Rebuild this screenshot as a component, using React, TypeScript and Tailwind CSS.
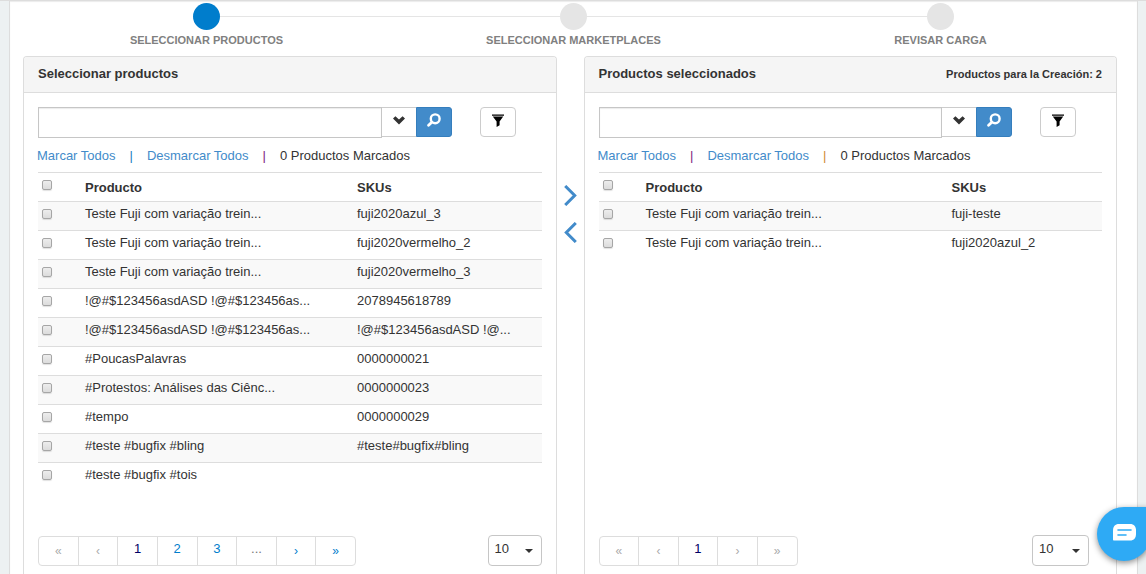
import { useState } from 'react';

type Product = { name: string; sku: string };

const AVAILABLE: Product[] = [
   { name: 'Teste Fuji com variação trein...', sku: 'fuji2020azul_3' },
   { name: 'Teste Fuji com variação trein...', sku: 'fuji2020vermelho_2' },
   { name: 'Teste Fuji com variação trein...', sku: 'fuji2020vermelho_3' },
   { name: '!@#$123456asdASD !@#$123456as...', sku: '2078945618789' },
   { name: '!@#$123456asdASD !@#$123456as...', sku: '!@#$123456asdASD !@...' },
   { name: '#PoucasPalavras', sku: '0000000021' },
   { name: '#Protestos: Análises das Ciênc...', sku: '0000000023' },
   { name: '#tempo', sku: '0000000029' },
   { name: '#teste #bugfix #bling', sku: '#teste#bugfix#bling' },
   { name: '#teste #bugfix #tois', sku: '' },
];

const SELECTED: Product[] = [
   { name: 'Teste Fuji com variação trein...', sku: 'fuji-teste' },
   { name: 'Teste Fuji com variação trein...', sku: 'fuji2020azul_2' },
];

const STEPS = ['SELECCIONAR PRODUCTOS', 'SELECCIONAR MARKETPLACES', 'REVISAR CARGA'];

function Steps() {
   return (
      <ol className="mr-[-7px] flex">
         {STEPS.map((label, index) => (
            <li key={label} className="relative flex flex-1 flex-col items-center">
               {index > 0 ? (
                  <span className="absolute top-[13px] right-1/2 h-px w-full bg-[#e5e5e5]" />
               ) : null}
               <span
                  className={`relative z-10 size-[27px] rounded-full ${index === 0 ? 'bg-[#007dcc]' : 'bg-[#e5e5e5]'}`}
               />
               {index === 0 ? (
                  <span className="absolute top-[13px] left-1/2 h-px w-1/2 bg-[#e5e5e5]" />
               ) : null}
               <span className="mt-[2px] text-[11px] leading-4 font-bold text-[#808080]">{label}</span>
            </li>
         ))}
      </ol>
   );
}

function Checkbox({ label }: { label: string }) {
   return (
      <input
         type="checkbox"
         aria-label={label}
         className="block size-[10px] appearance-none rounded-[2px] border border-[#a6a6a6] bg-linear-to-b from-[#ededed] to-[#dcdcdc] shadow-[0_1px_1px_rgba(0,0,0,0.12)] checked:from-[#428bca] checked:to-[#357ebd]"
      />
   );
}

function SearchBar({ label }: { label: string }) {
   return (
      <div className="flex items-start pr-[26px]">
         <input
            type="text"
            aria-label={label}
            className="h-[31px] min-w-0 flex-1 border border-[#c6c6c6] bg-white px-2 shadow-[inset_0_1px_1px_rgba(0,0,0,0.08)] outline-none"
         />
         <button
            type="button"
            aria-label="Opciones"
            className="flex h-[30px] w-[34px] items-center justify-center border-y border-[#ccc] bg-white"
         >
            <svg width="12" height="9" viewBox="0 0 12 9" className="mb-1" aria-hidden="true">
               <path d="M0 2.6 2.4 0.2 6 3.6 9.6 0.2 12 2.6 6 8.6Z" fill="#333" />
            </svg>
         </button>
         <button
            type="button"
            aria-label="Buscar"
            className="flex h-[30px] w-9 items-center justify-center rounded-r-[3px] border border-[#357ebd] bg-[#428bca]"
         >
            <svg width="14" height="14" viewBox="0 0 14 14" className="mb-1" aria-hidden="true">
               <circle cx="8.2" cy="5.8" r="4.4" fill="none" stroke="#fff" strokeWidth="2.4" />
               <path d="M4.8 9.2 1.6 12.2" stroke="#fff" strokeWidth="2.8" strokeLinecap="round" />
            </svg>
         </button>
         <button
            type="button"
            aria-label="Filtrar"
            className="ml-7 flex h-[30px] w-9 items-center justify-center rounded-[4px] border border-[#ccc] bg-white"
         >
            <svg width="12" height="13" viewBox="0 0 12 13" className="mb-1" aria-hidden="true">
               <path d="M0 0.5H12V1.8H0ZM0.8 2.6H11.2L7.6 7.6V11.2L4.6 13V7.6Z" fill="#000" />
            </svg>
         </button>
      </div>
   );
}

function MarkLinks({ separators }: { separators: [string, string] }) {
   return (
      <div className="-ml-px flex items-center gap-[14px] pt-2 leading-5">
         <a href="#marcar" className="text-[#428bca]">
            Marcar Todos
         </a>
         <span className={separators[0]}>|</span>
         <a href="#desmarcar" className="text-[#428bca]">
            Desmarcar Todos
         </a>
         <span className={separators[1]}>|</span>
         <span>0 Productos Marcados</span>
      </div>
   );
}

function ProductTable({ products, nameWidth }: { products: Product[]; nameWidth: string }) {
   return (
      <table className="mt-[6px] w-full table-fixed border-collapse text-left">
         <colgroup>
            <col className="w-[39px]" />
            <col className={nameWidth} />
            <col />
         </colgroup>
         <thead>
            <tr className="h-[29px] border-t border-[#ddd]">
               <th className="pb-1 pl-1 align-middle">
                  <Checkbox label="Seleccionar todos" />
               </th>
               <th className="px-2 pt-px align-middle">Producto</th>
               <th className="px-2 pt-px align-middle">SKUs</th>
            </tr>
         </thead>
         <tbody>
            {products.map((product, index) => (
               <tr key={index} className="h-[29px] border-t border-[#ddd] odd:bg-[#f9f9f9]">
                  <td className="pb-1 pl-1 align-middle">
                     <Checkbox label={product.name} />
                  </td>
                  <td className="truncate px-2 pb-1 align-middle">{product.name}</td>
                  <td className="truncate px-2 pb-1 align-middle">{product.sku}</td>
               </tr>
            ))}
         </tbody>
      </table>
   );
}

type PagerProps = {
   pages: string[];
   hasNext: boolean;
   width: string;
   selectWidth: string;
};

function Pager({ pages, hasNext, width, selectWidth }: PagerProps) {
   const [current, setCurrent] = useState('1');
   const items = ['«', '‹', ...pages, '›', '»'];

   const tone = (item: string) => {
      if (item === current) return 'text-[#000066]';
      if (item === '...') return 'text-[#777]';
      if (item === '«' || item === '‹') return 'text-[#aaa]';
      if (item === '›' || item === '»') return hasNext ? 'text-[#007dcc]' : 'text-[#aaa]';
      return 'text-[#007dcc]';
   };

   return (
      <div className="flex items-end justify-between">
         <nav
            aria-label="Paginación"
            className={`flex h-[30px] divide-x divide-[#ddd] rounded-[4px] border border-[#ddd] ${width}`}
         >
            {items.map((item) => (
               <button
                  key={item}
                  type="button"
                  onClick={() => {
                     if (pages.includes(item) && item !== '...') setCurrent(item);
                  }}
                  className={`flex-1 text-center ${pages.includes(item) ? 'pb-1 text-[13px]' : 'text-xs'} ${tone(item)}`}
               >
                  {item}
               </button>
            ))}
         </nav>
         <div className={`relative ${selectWidth}`}>
            <select
               aria-label="Resultados por página"
               className="block h-[31px] w-full appearance-none rounded-[4px] border border-[#c6c6c6] bg-white pb-1 pl-[6px] outline-none"
            >
               <option>10</option>
               <option>25</option>
               <option>50</option>
            </select>
            <svg
               width="8"
               height="4"
               viewBox="0 0 8 4"
               className="pointer-events-none absolute top-[14px] right-[9px]"
               aria-hidden="true"
            >
               <path d="M0 0H8L4 4Z" fill="#333" />
            </svg>
         </div>
      </div>
   );
}

type PanelProps = {
   title: string;
   note?: string;
   products: Product[];
   nameWidth: string;
   separators: [string, string];
   pager: PagerProps;
};

function Panel({ title, note, products, nameWidth, separators, pager }: PanelProps) {
   return (
      <section className="flex min-w-0 flex-1 flex-col rounded-t-[4px] border border-b-0 border-[#ddd]">
         <header className="flex h-9 items-center justify-between rounded-t-[3px] border-b border-[#ddd] bg-[#f5f5f5] px-[14px] pb-px">
            <h2 className="font-bold">{title}</h2>
            {note ? <span className="text-[11px] font-bold">{note}</span> : null}
         </header>
         <div className="flex flex-1 flex-col px-[14px] pt-[14px] pb-2">
            <SearchBar label={title} />
            <MarkLinks separators={separators} />
            <ProductTable products={products} nameWidth={nameWidth} />
            <div className="mt-auto">
               <Pager {...pager} />
            </div>
         </div>
      </section>
   );
}

function TransferButtons() {
   return (
      <div className="flex w-[27px] shrink-0 flex-col items-center gap-4 pt-[129px]">
         <button type="button" aria-label="Agregar">
            <svg width="13" height="21" viewBox="0 0 13 21" aria-hidden="true">
               <path d="M1.2 1 10.7 10.5 1.2 20" fill="none" stroke="#428bca" strokeWidth="3" />
            </svg>
         </button>
         <button type="button" aria-label="Quitar">
            <svg width="13" height="21" viewBox="0 0 13 21" aria-hidden="true">
               <path d="M11.8 1 2.3 10.5 11.8 20" fill="none" stroke="#428bca" strokeWidth="3" />
            </svg>
         </button>
      </div>
   );
}

function ChatButton() {
   return (
      <button
         type="button"
         aria-label="Chat"
         className="fixed right-[-5px] bottom-[13px] flex size-[54px] items-center justify-center rounded-full rounded-tr-none bg-[#2eaaf5] shadow-[0_2px_6px_rgba(0,0,0,0.45)]"
      >
         <svg width="23" height="17" viewBox="0 0 23 17" className="mb-1" aria-hidden="true">
            <path
               d="M6 0H17C21 0 23 2.5 23 6.5V9.5C23 14 21 16.5 17 16.5H1C0.3 16.5 0 16 0 15.5V6.5C0 2.5 2 0 6 0Z"
               fill="#fff"
            />
            <path d="M5 6H18M5 11H13" stroke="#2eaaf5" strokeWidth="1.6" strokeLinecap="round" />
         </svg>
      </button>
   );
}

export default function App() {
   return (
      <div className="flex min-h-screen flex-col border-t border-[#ddd] bg-[#edf1f2] pr-2 pl-[9px] font-['Liberation_Sans',Arial,sans-serif] text-[13px] leading-5 text-[#333]">
         <main className="flex flex-1 flex-col border-x border-[#ddd] bg-white pt-[2px] pr-5 pl-[13px] shadow-[inset_0_1px_1px_rgba(0,0,0,0.08)]">
            <Steps />
            <div className="mt-2 flex flex-1">
               <Panel
                  title="Seleccionar productos"
                  products={AVAILABLE}
                  nameWidth="w-[272px]"
                  separators={['text-[#2080c0]', 'text-[#802080]']}
                  pager={{
                     pages: ['1', '2', '3', '...'],
                     hasNext: true,
                     width: 'w-[318px]',
                     selectWidth: 'w-[54px]',
                  }}
               />
               <TransferButtons />
               <Panel
                  title="Productos seleccionados"
                  note="Productos para la Creación: 2"
                  products={SELECTED}
                  nameWidth="w-[306px]"
                  separators={['text-[#802080]', 'text-[#d08a30]']}
                  pager={{
                     pages: ['1'],
                     hasNext: false,
                     width: 'w-[199px]',
                     selectWidth: 'mr-[13px] w-[57px]',
                  }}
               />
            </div>
         </main>
         <ChatButton />
      </div>
   );
}
